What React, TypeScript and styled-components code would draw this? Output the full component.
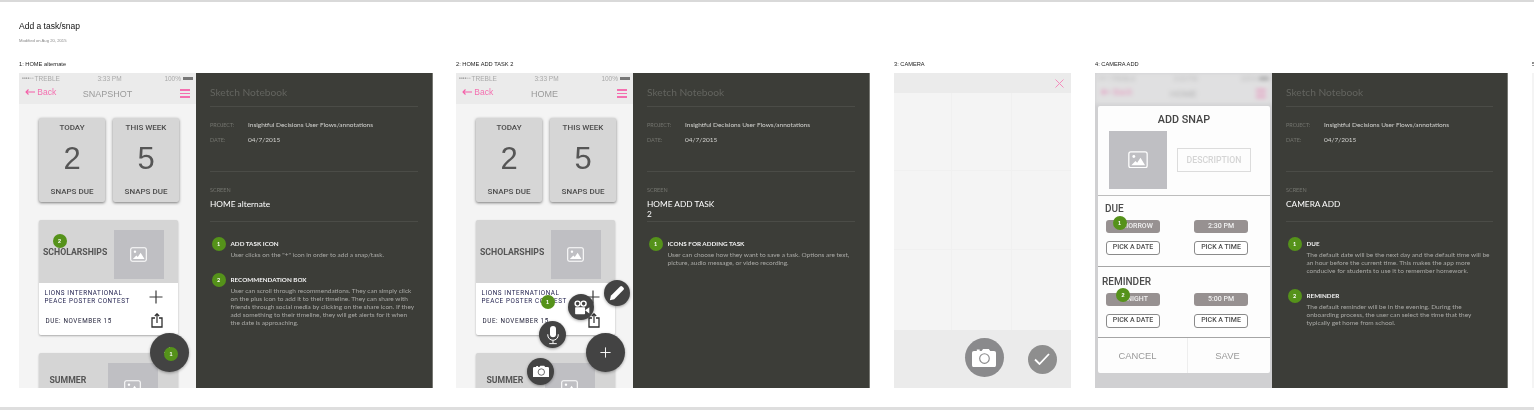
import styled, { createGlobalStyle } from "styled-components";

const DIN = `Roboto, "Liberation Sans", sans-serif`;
const HELV = `"Liberation Sans", Arial, sans-serif`;
const JOANNA = `Lato, "Open Sans", sans-serif`;

interface INote {
  title: string;
  text: string;
}

interface IScreen {
  screen: string;
  notes: INote[];
}

function ImageIcon({ size = 17 }: { size?: number }) {
  return (
    <svg width={size} height={size * 0.88} viewBox="0 0 24 21">
      <rect x="1" y="1" width="22" height="19" rx="2.5" fill="none" stroke="#fff" strokeWidth="1.5" />
      <circle cx="7" cy="6.5" r="1.7" fill="#fff" />
      <path d="M4 17l5-5 2 2 4-6 5.500 9z" fill="#fff" />
    </svg>
  );
}

function PlusIcon({ size = 14, color = "#3a3a3a" }: { size?: number; color?: string }) {
  return (
    <svg width={size} height={size} viewBox="0 0 14 14">
      <path d="M7 0.500v13M0.500 7h13" stroke={color} strokeWidth="1.200" fill="none" />
    </svg>
  );
}

function ShareIcon() {
  return (
    <svg width="12" height="15" viewBox="0 0 12 15">
      <path d="M4 5H1v9h10V5H8" stroke="#2e2e2e" strokeWidth="1.300" fill="none" />
      <path d="M6 10V1M3.800 3L6 .8 8.200 3" stroke="#2e2e2e" strokeWidth="1.200" fill="none" />
    </svg>
  );
}

function PencilIcon() {
  return (
    <svg width="18" height="18" viewBox="0 0 24 24">
      <path d="M2.500 21.500l1.300-5.800L16.200 3.300a2 2 0 0 1 2.800 0l1.700 1.700a2 2 0 0 1 0 2.800L8.300 20.200z" fill="#fff" />
    </svg>
  );
}

function VideoIcon() {
  return (
    <svg width="17" height="17" viewBox="0 0 24 24">
      <circle cx="6.500" cy="6.500" r="3.500" fill="none" stroke="#fff" strokeWidth="2" />
      <circle cx="15" cy="6.500" r="3.500" fill="none" stroke="#fff" strokeWidth="2" />
      <rect x="3" y="11.500" width="14" height="10" rx="1" fill="#fff" />
      <path d="M17 16l6-4.500v9z" fill="#fff" />
    </svg>
  );
}

function MicIcon() {
  return (
    <svg width="18" height="20" viewBox="0 0 24 26">
      <rect x="8" y="1" width="8" height="15" rx="4" fill="#fff" />
      <path d="M5 12v1a7 7 0 0 0 14 0v-1M12 20v4M7 24.500h10" stroke="#fff" strokeWidth="1.300" fill="none" />
    </svg>
  );
}

function CameraIcon({ size = 16, lens = "#444" }: { size?: number; lens?: string }) {
  return (
    <svg width={size} height={size * 0.8} viewBox="0 0 25 20">
      <path d="M2 3h3V1.500h3V3h2l1.500-2h6L19 3h4a2 2 0 0 1 2 2v13a2 2 0 0 1-2 2H2a2 2 0 0 1-2-2V5a2 2 0 0 1 2-2z" fill="#fff" />
      <circle cx="13" cy="11" r="5" fill="none" stroke={lens} strokeWidth="1.200" />
    </svg>
  );
}

function CheckIcon() {
  return (
    <svg width="16" height="12" viewBox="0 0 16 12">
      <path d="M1 6.500l4.500 4.500L15 1" stroke="#fff" strokeWidth="1.800" fill="none" />
    </svg>
  );
}

function CloseIcon() {
  return (
    <svg width="9" height="9" viewBox="0 0 9 9">
      <path d="M.5.500l8 8M8.500.500l-8 8" stroke="#f48cbc" strokeWidth="1" fill="none" />
    </svg>
  );
}

function BackArrow() {
  return (
    <svg width="10" height="6" viewBox="0 0 10 6">
      <path d="M10 3H1M3.500.5L1 3l2.500 2.500" stroke="#f45fa8" strokeWidth="1.100" fill="none" />
    </svg>
  );
}

function PhoneHeader({ title }: { title: string }) {
  return (
    <Header>
      <StatusBar>
        <StatusLeft>
          <Dots>●●●●○○</Dots> TREBLE
        </StatusLeft>
        <StatusTime>3:33 PM</StatusTime>
        <StatusRight>
          100%
          <Battery />
        </StatusRight>
      </StatusBar>
      <Nav>
        <Back>
          <BackArrow /> Back
        </Back>
        <NavTitle>{title}</NavTitle>
        <Burger>
          <BurgerLine />
          <BurgerLine />
          <BurgerLine />
        </Burger>
      </Nav>
    </Header>
  );
}

function HomeBody() {
  return (
    <>
      <Stats>
        <StatCard>
          <StatLabel>TODAY</StatLabel>
          <StatNumber>2</StatNumber>
          <StatLabel>SNAPS DUE</StatLabel>
        </StatCard>
        <StatCard>
          <StatLabel>THIS WEEK</StatLabel>
          <StatNumber>5</StatNumber>
          <StatLabel>SNAPS DUE</StatLabel>
        </StatCard>
      </Stats>
      <RecCard>
        <RecTop $indent={4.5} $right={14}>
          <RecTitle>SCHOLARSHIPS</RecTitle>
          <Placeholder>
            <ImageIcon />
          </Placeholder>
        </RecTop>
        <RecBottom>
          <RecRow>
            <RecName>
              LIONS INTERNATIONAL
              <br />
              PEACE POSTER CONTEST
            </RecName>
            <PlusIcon />
          </RecRow>
          <RecRow>
            <RecDue>DUE: NOVEMBER 15</RecDue>
            <ShareIcon />
          </RecRow>
        </RecBottom>
      </RecCard>
      <RecCard>
        <RecTop $indent={11} $right={20} $lift={5}>
          <RecTitle>SUMMER</RecTitle>
          <Placeholder>
            <ImageIcon />
          </Placeholder>
        </RecTop>
      </RecCard>
    </>
  );
}

function Notebook({ screen, notes }: IScreen) {
  return (
    <Panel>
      <PanelTitle>Sketch Notebook</PanelTitle>
      <Meta>
        <MetaRow>
          <MetaKey>PROJECT:</MetaKey>
          <MetaValue>Insightful Decisions User Flows/annotations</MetaValue>
        </MetaRow>
        <MetaRow>
          <MetaKey>DATE:</MetaKey>
          <MetaValue>04/7/2015</MetaValue>
        </MetaRow>
      </Meta>
      <ScreenBlock>
        <MetaKey>SCREEN</MetaKey>
        <ScreenName>{screen}</ScreenName>
      </ScreenBlock>
      <Notes>
        {notes.map((note, i) => (
          <Note key={note.title}>
            <NoteBadge>{i + 1}</NoteBadge>
            <div>
              <NoteTitle>{note.title}</NoteTitle>
              <NoteText>{note.text}</NoteText>
            </div>
          </Note>
        ))}
      </Notes>
    </Panel>
  );
}

function ChipGroup({
  title,
  value,
  time,
  indent,
  top,
}: {
  title: string;
  value: string;
  time: string;
  indent: number;
  top: number;
}) {
  return (
    <Section>
      <SectionTitle $indent={indent} $top={top}>
        {title}
      </SectionTitle>
      <Chips>
        <Chip>{value}</Chip>
        <Chip>{time}</Chip>
        <OutlineChip>PICK A DATE</OutlineChip>
        <OutlineChip>PICK A TIME</OutlineChip>
      </Chips>
    </Section>
  );
}

export default function App() {
  return (
    <Page>
      <GlobalStyle />
      <Rule />
      <PageHead>
        <PageTitle>Add a task/snap</PageTitle>
        <Modified>Modified on Aug 20, 2015</Modified>
      </PageHead>
      <Board>
        <Column>
          <Label>1: HOME alternate</Label>
          <Screen $width={414}>
            <Phone>
              <PhoneHeader title="SNAPSHOT" />
              <HomeBody />
              <Pin $x={33.5} $y={161}>2</Pin>
              <Fab $x={130.5} $y={260} $size={39}>
                <PlusIcon size={11} color="#fff" />
              </Fab>
              <Pin $x={145} $y={274}>1</Pin>
            </Phone>
            <Notebook
              screen="HOME alternate"
              notes={[
                { title: "ADD TASK ICON", text: 'User clicks on the "+" icon in order to add a snap/task.' },
                {
                  title: "RECOMMENDATION BOX",
                  text: "User can scroll through recommendations. They can simply click on the plus icon to add it to their timeline. They can share with friends through social media by clicking on the share icon. If they add something to their timeline, they will get alerts for it when the date is approaching.",
                },
              ]}
            />
          </Screen>
        </Column>
        <Column>
          <Label>2: HOME ADD TASK 2</Label>
          <Screen $width={414}>
            <Phone>
              <PhoneHeader title="HOME" />
              <HomeBody />
              <Fab $x={130} $y={260} $size={39}>
                <PlusIcon size={11} color="#fff" />
              </Fab>
              <Fab $x={148} $y={207} $size={26}>
                <PencilIcon />
              </Fab>
              <Fab $x={112} $y={221} $size={26}>
                <VideoIcon />
              </Fab>
              <Fab $x={83} $y={248} $size={27}>
                <MicIcon />
              </Fab>
              <Fab $x={71} $y={284.500} $size={27}>
                <CameraIcon />
              </Fab>
              <Pin $x={84.500} $y={222}>1</Pin>
            </Phone>
            <Notebook
              screen="HOME ADD TASK 2"
              notes={[
                {
                  title: "ICONS FOR ADDING TASK",
                  text: "User can choose how they want to save a task. Options are text, picture, audio message, or video recording.",
                },
              ]}
            />
          </Screen>
        </Column>
        <CameraColumn>
          <Label>3: CAMERA</Label>
          <CameraTop>
            <CloseIcon />
          </CameraTop>
          <Viewfinder>
            {Array.from({ length: 9 }, (_, i) => (
              <GridCell key={i} />
            ))}
          </Viewfinder>
          <CameraBar>
            <Shutter>
              <CameraIcon size={24} lens="#8a8a8c" />
            </Shutter>
            <Confirm>
              <CheckIcon />
            </Confirm>
          </CameraBar>
        </CameraColumn>
        <Column>
          <Label>4: CAMERA ADD</Label>
          <Screen $width={413}>
            <DimPhone>
              <Blurred>
                <PhoneHeader title="HOME" />
              </Blurred>
              <Modal>
                <ModalTitle>ADD SNAP</ModalTitle>
                <SnapRow>
                  <SnapImage>
                    <ImageIcon size={20} />
                  </SnapImage>
                  <Description>DESCRIPTION</Description>
                </SnapRow>
                <ChipGroup title="DUE" value="TOMORROW" time="2:30 PM" indent={7} top={7} />
                <ChipGroup title="REMINDER" value="TONIGHT" time="5:00 PM" indent={4} top={9} />
                <ModalFooter>
                  <FooterButton $pad={10}>CANCEL</FooterButton>
                  <FooterButton $pad={3}>SAVE</FooterButton>
                </ModalFooter>
              </Modal>
              <Pin $x={17.500} $y={143}>1</Pin>
              <Pin $x={21} $y={215}>2</Pin>
            </DimPhone>
            <Notebook
              screen="CAMERA ADD"
              notes={[
                {
                  title: "DUE",
                  text: "The default date will be the next day and the default time will be an hour before the current time. This makes the app more conducive for students to use it to remember homework.",
                },
                {
                  title: "REMINDER",
                  text: "The default reminder will be in the evening. During the onboarding process, the user can select the time that they typically get home from school.",
                },
              ]}
            />
          </Screen>
        </Column>
        <Column>
          <Label>5: CAMERA</Label>
          <Screen $width={177}>
            <Phone />
          </Screen>
        </Column>
      </Board>
      <BottomRule />
    </Page>
  );
}

const GlobalStyle = createGlobalStyle`
  html, body {
    margin: 0;
    background: #ffffff;
  }
`;

const Page = styled.div`
  width: 1534px;
  height: 410px;
  overflow: hidden;
  display: flex;
  flex-direction: column;
  font-family: ${HELV};
  background: #ffffff;
  filter: blur(0.3px);
`;

const Rule = styled.div`
  height: 2px;
  flex: none;
  background: #d9d9d9;
`;

const BottomRule = styled(Rule)`
  height: 3px;
  margin-top: 19px;
  background: #dedede;
`;

const PageHead = styled.header`
  flex: none;
  height: 56px;
  padding: 19px 0 0 19px;
  box-sizing: border-box;
`;

const PageTitle = styled.h1`
  margin: 0;
  font-size: 8.500px;
  line-height: 10px;
  font-weight: 400;
  color: #111111;
`;

const Modified = styled.p`
  margin: 7px 0 0;
  font-size: 4.200px;
  line-height: 5px;
  color: #888888;
`;

const Board = styled.main`
  display: flex;
  gap: 24px;
  padding-left: 19px;
  height: 330px;
  flex: none;
`;

const Column = styled.section`
  flex: none;
  display: flex;
  flex-direction: column;
  &:first-child {
    margin-right: -1px;
  }
`;

const Label = styled.div`
  height: 15px;
  font-size: 5.700px;
  line-height: 13px;
  color: #222222;
  white-space: nowrap;
`;

const Screen = styled.div<{ $width: number }>`
  display: flex;
  width: ${(p) => p.$width}px;
  height: 315px;
`;

const Phone = styled.div`
  position: relative;
  flex: none;
  width: 177px;
  height: 315px;
  overflow: hidden;
  background: #f4f4f4;
`;

const DimPhone = styled(Phone)`
  background: #d0d0d2;
`;

const Blurred = styled.div`
  opacity: 0.6;
  filter: blur(2px);
`;

const Header = styled.div`
  height: 31px;
  background: #ebebeb;
`;

const StatusBar = styled.div`
  display: grid;
  grid-template-columns: 1fr auto 1fr;
  align-items: center;
  height: 10px;
  padding: 0 3px;
  font-size: 6.500px;
  color: #a9a9a9;
  white-space: nowrap;
`;

const StatusLeft = styled.span`
  display: flex;
  align-items: center;
  gap: 1px;
`;

const Dots = styled.span`
  font-size: 3.200px;
  color: #8c8c8c;
`;

const StatusTime = styled.span`
  margin-left: 4px;
`;

const StatusRight = styled.span`
  display: flex;
  align-items: center;
  justify-content: flex-end;
`;

const Battery = styled.i`
  width: 10px;
  height: 3px;
  margin-left: 2px;
  background: #777777;
`;

const Nav = styled.div`
  display: flex;
  align-items: center;
  justify-content: space-between;
  height: 21px;
  padding: 0 6px;
  position: relative;
`;

const Back = styled.span`
  font-size: 8.500px;
  color: #f470b0;
  margin-top: -3px;
`;

const NavTitle = styled.span`
  position: absolute;
  left: 0;
  right: 0;
  text-align: center;
  font-size: 9px;
  color: #9a9a9a;
`;

const Burger = styled.span`
  display: flex;
  flex-direction: column;
  gap: 2px;
  width: 10px;
`;

const BurgerLine = styled.span`
  display: block;
  height: 1.500px;
  background: #f470b0;
`;

const Stats = styled.div`
  display: flex;
  gap: 8px;
  margin: 14px 0 0 20px;
`;

const StatCard = styled.div`
  width: 66px;
  height: 84px;
  box-sizing: border-box;
  padding: 5px 0 6px;
  display: flex;
  flex-direction: column;
  align-items: center;
  justify-content: space-between;
  background: #d6d6d6;
  border-radius: 2px;
  box-shadow: 0 1px 3px rgba(0, 0, 0, 0.5);
`;

const StatLabel = styled.div`
  font-family: ${DIN};
  font-size: 8px;
  font-weight: 500;
  color: #4c4c4c;
`;

const StatNumber = styled.div`
  margin-top: -3px;
  font-size: 31px;
  line-height: 31px;
  color: #565656;
`;

const RecCard = styled.div`
  width: 139px;
  margin: 18px 0 0 19.500px;
  border-radius: 2px;
  background: #d5d5d5;
  box-shadow: 0 1px 2px rgba(0, 0, 0, 0.3);
  overflow: hidden;
`;

const RecTop = styled.div<{ $indent: number; $right: number; $lift?: number }>`
  display: flex;
  align-items: flex-start;
  height: 63px;
  box-sizing: border-box;
  padding: 10px ${(p) => p.$right}px 0 ${(p) => p.$indent}px;
  & > div:first-child {
    margin-top: ${(p) => 16.500 - (p.$lift ?? 0)}px;
  }
`;

const RecTitle = styled.div`
  flex: 1;
  font-family: ${DIN};
  font-size: 8.700px;
  line-height: 11px;
  font-weight: 700;
  color: #555555;
`;

const Placeholder = styled.div`
  flex: none;
  width: 50px;
  height: 49px;
  display: flex;
  align-items: center;
  justify-content: center;
  background: #bfbfc3;
`;

const RecBottom = styled.div`
  height: 52px;
  box-sizing: border-box;
  padding: 6px 15px 7px 6px;
  background: #ffffff;
  display: flex;
  flex-direction: column;
  justify-content: space-between;
`;

const RecRow = styled.div`
  display: flex;
  align-items: center;
  justify-content: space-between;
`;

const RecName = styled.div`
  font-family: ${DIN};
  font-size: 6.300px;
  line-height: 8px;
  letter-spacing: 0.600px;
  color: #22224f;
`;

const RecDue = styled(RecName)`
  padding-left: 1px;
  color: #22223a;
`;

const Pin = styled.div<{ $x: number; $y: number }>`
  position: absolute;
  left: ${(p) => p.$x}px;
  top: ${(p) => p.$y}px;
  width: 14px;
  height: 14px;
  border-radius: 50%;
  background: #55921a;
  color: #ffffff;
  font-size: 5.500px;
  font-weight: 700;
  line-height: 14px;
  text-align: center;
`;

const Fab = styled.div<{ $x: number; $y: number; $size: number }>`
  position: absolute;
  left: ${(p) => p.$x}px;
  top: ${(p) => p.$y}px;
  width: ${(p) => p.$size}px;
  height: ${(p) => p.$size}px;
  border-radius: 50%;
  display: flex;
  align-items: center;
  justify-content: center;
  background: #434343;
  box-shadow: 0 1px 3px rgba(0, 0, 0, 0.35);
`;

const Panel = styled.aside`
  flex: 1;
  min-width: 0;
  box-sizing: border-box;
  padding: 0 14px;
  background: #3c3d38;
  border-right: 1px solid #777873;
  font-family: ${JOANNA};
`;

const PanelTitle = styled.div`
  height: 34px;
  box-sizing: border-box;
  padding-top: 13px;
  font-size: 10.200px;
  line-height: 12px;
  color: #63645f;
  border-bottom: 1px solid #4b4c47;
`;

const Meta = styled.div`
  height: 65px;
  box-sizing: border-box;
  padding-top: 14px;
  border-bottom: 1px solid #4b4c47;
`;

const MetaRow = styled.div`
  display: flex;
  height: 15px;
  line-height: 8px;
`;

const MetaKey = styled.span`
  display: block;
  width: 38px;
  flex: none;
  font-size: 5.500px;
  line-height: 8px;
  color: #74756f;
`;

const MetaValue = styled.span`
  font-size: 6.500px;
  line-height: 8px;
  color: #d3d3d0;
`;

const ScreenBlock = styled.div`
  height: 50px;
  box-sizing: border-box;
  padding-top: 14px;
  border-bottom: 1px solid #4b4c47;
`;

const ScreenName = styled.div`
  width: 72px;
  margin-top: 5px;
  font-size: 8.300px;
  line-height: 10px;
  color: #ffffff;
`;

const Notes = styled.div`
  display: flex;
  flex-direction: column;
  gap: 17px;
  padding-top: 18px;
`;

const Note = styled.div`
  display: flex;
  gap: 5px;
`;

const NoteBadge = styled.div`
  flex: none;
  width: 14px;
  height: 14px;
  margin: -3px 0 0 1.500px;
  border-radius: 50%;
  background: #55921a;
  color: #ffffff;
  font-size: 5.500px;
  font-weight: 700;
  line-height: 14px;
  text-align: center;
`;

const NoteTitle = styled.div`
  margin-bottom: 3px;
  font-size: 6.300px;
  line-height: 8px;
  font-weight: 700;
  color: #f2f2f2;
`;

const NoteText = styled.div`
  font-size: 6.500px;
  line-height: 8px;
  color: #a9a9a6;
`;

const CameraColumn = styled(Column)`
  width: 177px;
`;

const CameraTop = styled.div`
  height: 20px;
  display: flex;
  align-items: center;
  justify-content: flex-end;
  padding-right: 7px;
  background: #ebebeb;
`;

const Viewfinder = styled.div`
  height: 237px;
  display: grid;
  grid-template-columns: 58px 60px 59px;
  grid-template-rows: 78px 79px 80px;
  background: #f4f4f4;
`;

const GridCell = styled.div`
  border-right: 1px solid #f0f0f0;
  border-bottom: 1px solid #f0f0f0;
  &:nth-child(3n) {
    border-right: none;
  }
  &:nth-child(n + 7) {
    border-bottom: none;
  }
`;

const CameraBar = styled.div`
  height: 58px;
  display: flex;
  align-items: center;
  padding-left: 70.500px;
  gap: 24px;
  background: #ebebeb;
`;

const Shutter = styled.div`
  width: 39px;
  height: 39px;
  margin-top: -3px;
  border-radius: 50%;
  display: flex;
  align-items: center;
  justify-content: center;
  background: #8a8a8c;
`;

const Confirm = styled.div`
  width: 29px;
  height: 29px;
  border-radius: 50%;
  display: flex;
  align-items: center;
  justify-content: center;
  background: #8e8e8e;
`;

const Modal = styled.div`
  position: absolute;
  left: 3px;
  top: 33px;
  width: 172px;
  height: 267px;
  display: flex;
  flex-direction: column;
  border-radius: 2px;
  background: #fdfdfd;
`;

const ModalTitle = styled.div`
  height: 25px;
  padding-top: 2px;
  box-sizing: border-box;
  text-align: center;
  font-family: ${DIN};
  font-size: 10.800px;
  line-height: 23px;
  font-weight: 500;
  color: #454545;
`;

const SnapRow = styled.div`
  display: flex;
  align-items: center;
  gap: 10px;
  height: 65px;
  padding: 0 0 7px 11px;
  box-sizing: border-box;
  border-bottom: 1.500px solid #bdbdbd;
`;

const SnapImage = styled.div`
  width: 58px;
  height: 58px;
  display: flex;
  align-items: center;
  justify-content: center;
  background: #bfbfc3;
`;

const Description = styled.div`
  width: 74px;
  height: 24px;
  box-sizing: border-box;
  border: 1px solid #dcdcdc;
  font-family: ${DIN};
  font-size: 8.700px;
  font-weight: 500;
  line-height: 22px;
  text-align: center;
  color: #d5d5d5;
`;

const Section = styled.div`
  height: 70px;
  border-bottom: 1px solid #a5a5a5;
  &:last-of-type {
    border-bottom-color: #eeeeee;
  }
`;

const SectionTitle = styled.div<{ $indent: number; $top: number }>`
  height: ${(p) => p.$top + 17}px;
  padding: ${(p) => p.$top}px 0 0 ${(p) => p.$indent}px;
  box-sizing: border-box;
  font-family: ${DIN};
  font-size: 10px;
  line-height: 11px;
  font-weight: 500;
  color: #4b4b4b;
`;

const Chips = styled.div`
  display: grid;
  grid-template-columns: 54px 54px;
  column-gap: 34px;
  row-gap: 8px;
  padding-left: 8px;
`;

const Chip = styled.div`
  height: 13px;
  border-radius: 3px;
  text-align: center;
  font-family: ${DIN};
  font-size: 7px;
  line-height: 13px;
  font-weight: 500;
  color: #f2f2f2;
  background: #979191;
`;

const OutlineChip = styled(Chip)`
  height: 14px;
  box-sizing: border-box;
  border: 1.300px solid #8a8a8a;
  line-height: 11.500px;
  color: #4c4c4c;
  background: #ffffff;
`;

const ModalFooter = styled.div`
  flex: 1;
  display: flex;
`;

const FooterButton = styled.div<{ $pad: number }>`
  flex: 1;
  display: flex;
  align-items: center;
  justify-content: center;
  padding-right: ${(p) => p.$pad}px;
  font-size: 9.400px;
  color: #9a9a9a;
  & + & {
    border-left: 1px solid #eeeeee;
  }
`;
